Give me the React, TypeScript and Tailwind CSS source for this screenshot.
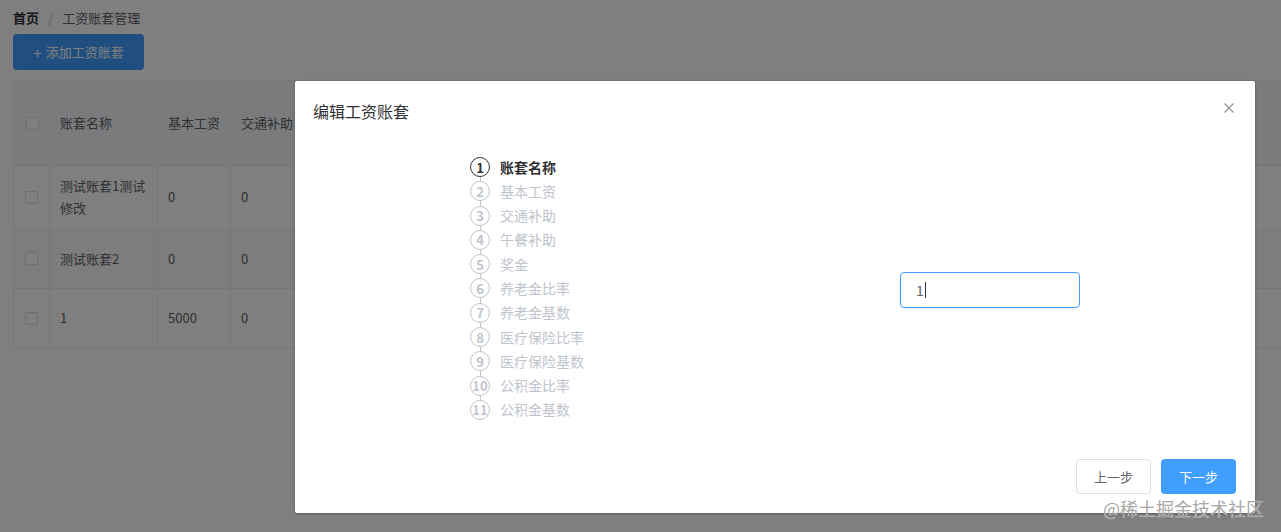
import React from 'react';

const steps = [
  '账套名称',
  '基本工资',
  '交通补助',
  '午餐补助',
  '奖金',
  '养老金比率',
  '养老金基数',
  '医疗保险比率',
  '医疗保险基数',
  '公积金比率',
  '公积金基数',
];

const rows = [
  { name: ['测试账套1测试', '修改'], base: '0', traffic: '0', h: 'h-[63px]', bg: 'bg-white' },
  { name: ['测试账套2'], base: '0', traffic: '0', h: 'h-[60px]', bg: 'bg-[#fafafa]' },
  { name: ['1'], base: '5000', traffic: '0', h: 'h-[59px]', bg: 'bg-white' },
];

function Checkbox() {
  return <span className="block w-[13px] h-[13px] rounded-[2px] border border-[#dcdfe6] bg-white" />;
}

function Page() {
  return (
    <div className="pl-[13px] pt-[11px]">
      {/* 面包屑 */}
      <div className="flex items-center text-[13px] leading-[14px]">
        <span className="font-bold text-[#303133]">首页</span>
        <span className="mx-[9px] text-[#c0c4cc]">/</span>
        <span className="text-[#606266]">工资账套管理</span>
      </div>

      <button className="mt-[9px] flex items-center h-[36px] w-[131px] justify-center rounded-[4px] bg-[#409eff] text-white text-[13px]">
        <span className="mr-[4px] text-[15px] leading-none">+</span>
        添加工资账套
      </button>

      {/* 表格 */}
      <div className="mt-[10px] w-[1300px] border-l border-t border-[#ebeef5] text-[13px] text-[#606266]">
        <div className="flex h-[85px] items-center bg-[#f5f7fa] border-b border-[#ebeef5]">
          <div className="w-[36px] flex justify-center">
            <Checkbox />
          </div>
          <div className="w-[108px] pl-[10px]">账套名称</div>
          <div className="w-[73px] pl-[10px]">基本工资</div>
          <div className="w-[73px] pl-[10px]">交通补助</div>
        </div>
        {rows.map((r, i) => (
          <div key={i} className={`flex ${r.h} ${r.bg} border-b border-[#ebeef5]`}>
            <div className="w-[36px] flex items-center justify-center border-r border-[#ebeef5]">
              <Checkbox />
            </div>
            <div className="w-[108px] pl-[10px] flex flex-col justify-center leading-[22px] border-r border-[#ebeef5]">
              {r.name.map((n) => (
                <span key={n}>{n}</span>
              ))}
            </div>
            <div className="w-[73px] pl-[10px] flex items-center border-r border-[#ebeef5]">{r.base}</div>
            <div className="w-[73px] pl-[10px] flex items-center border-r border-[#ebeef5]">{r.traffic}</div>
            <div className="flex-1" />
          </div>
        ))}
      </div>
    </div>
  );
}

function Steps() {
  return (
    <div className="flex flex-col mb-[3px]">
      {steps.map((s, i) => {
        const active = i === 0;
        return (
          <div key={s} className="relative flex items-center h-[24.3px]">
            <span
              className={`flex items-center justify-center w-[20px] h-[20px] rounded-full border-[1.5px] text-[13px] font-bold leading-none ${
                active ? 'border-[#303133] text-[#303133]' : 'border-[#c0c4cc] text-[#c0c4cc]'
              }`}
            >
              {i + 1}
            </span>
            {i < steps.length - 1 && (
              <span className="absolute left-[9.5px] top-[22px] w-px h-[4.6px] bg-[#c0c4cc]" />
            )}
            <span
              className={`ml-[10px] text-[14px] ${
                active ? 'font-bold text-[#303133]' : 'text-[#c0c4cc]'
              }`}
            >
              {s}
            </span>
          </div>
        );
      })}
    </div>
  );
}

function Dialog() {
  return (
    <div className="flex flex-col w-[960px] h-[432px] bg-white rounded-[2px] shadow-[0_1px_3px_rgba(0,0,0,0.3)]">
      <div className="relative flex pl-[18px] pt-[20px] pr-[20px]">
        <span className="text-[16px] leading-[20px] text-[#303133]">编辑工资账套</span>
        <svg
          className="absolute right-[21px] top-[22px]"
          width="10"
          height="10"
          viewBox="0 0 10 10"
          fill="none"
          stroke="#909399"
          strokeWidth="1.2"
        >
          <path d="M0.5 0.5 L9.5 9.5 M9.5 0.5 L0.5 9.5" />
        </svg>
      </div>

      <div className="flex-1 flex items-center pl-[175px]">
        <div className="w-[200px]">
          <Steps />
        </div>
        <div className="ml-[230px] flex items-center w-[180px] h-[36px] rounded-[4px] border border-[#409eff] pl-[15px] text-[14px] text-[#606266]">
          <span>1</span>
          <span className="ml-[1px] w-px h-[16px] bg-[#303133]" />
        </div>
      </div>

      <div className="flex justify-end gap-[10px] pr-[19px] pb-[19px]">
        <button className="w-[75px] h-[35px] rounded-[4px] border border-[#dcdfe6] bg-white text-[13px] text-[#606266]">
          上一步
        </button>
        <button className="w-[75px] h-[35px] rounded-[4px] bg-[#409eff] text-[13px] text-white">
          下一步
        </button>
      </div>
    </div>
  );
}

export default function App() {
  return (
    <div
      className="relative w-full h-[532px] overflow-hidden bg-white"
      style={{ fontFamily: '"Noto Sans CJK SC", "Noto Sans", sans-serif' }}
    >
      <Page />

      {/* 遮罩 + 弹窗 */}
      <div className="absolute inset-0 bg-black/50 pl-[295px] pt-[81px]">
        <Dialog />
      </div>

      {/* 水印 */}
      <span className="absolute left-[1103px] top-[496px] text-[18px] leading-[24px] text-[#a8a8a8] [text-shadow:0_0_1px_rgba(255,255,255,0.6)]">
        @稀土掘金技术社区
      </span>
    </div>
  );
}
